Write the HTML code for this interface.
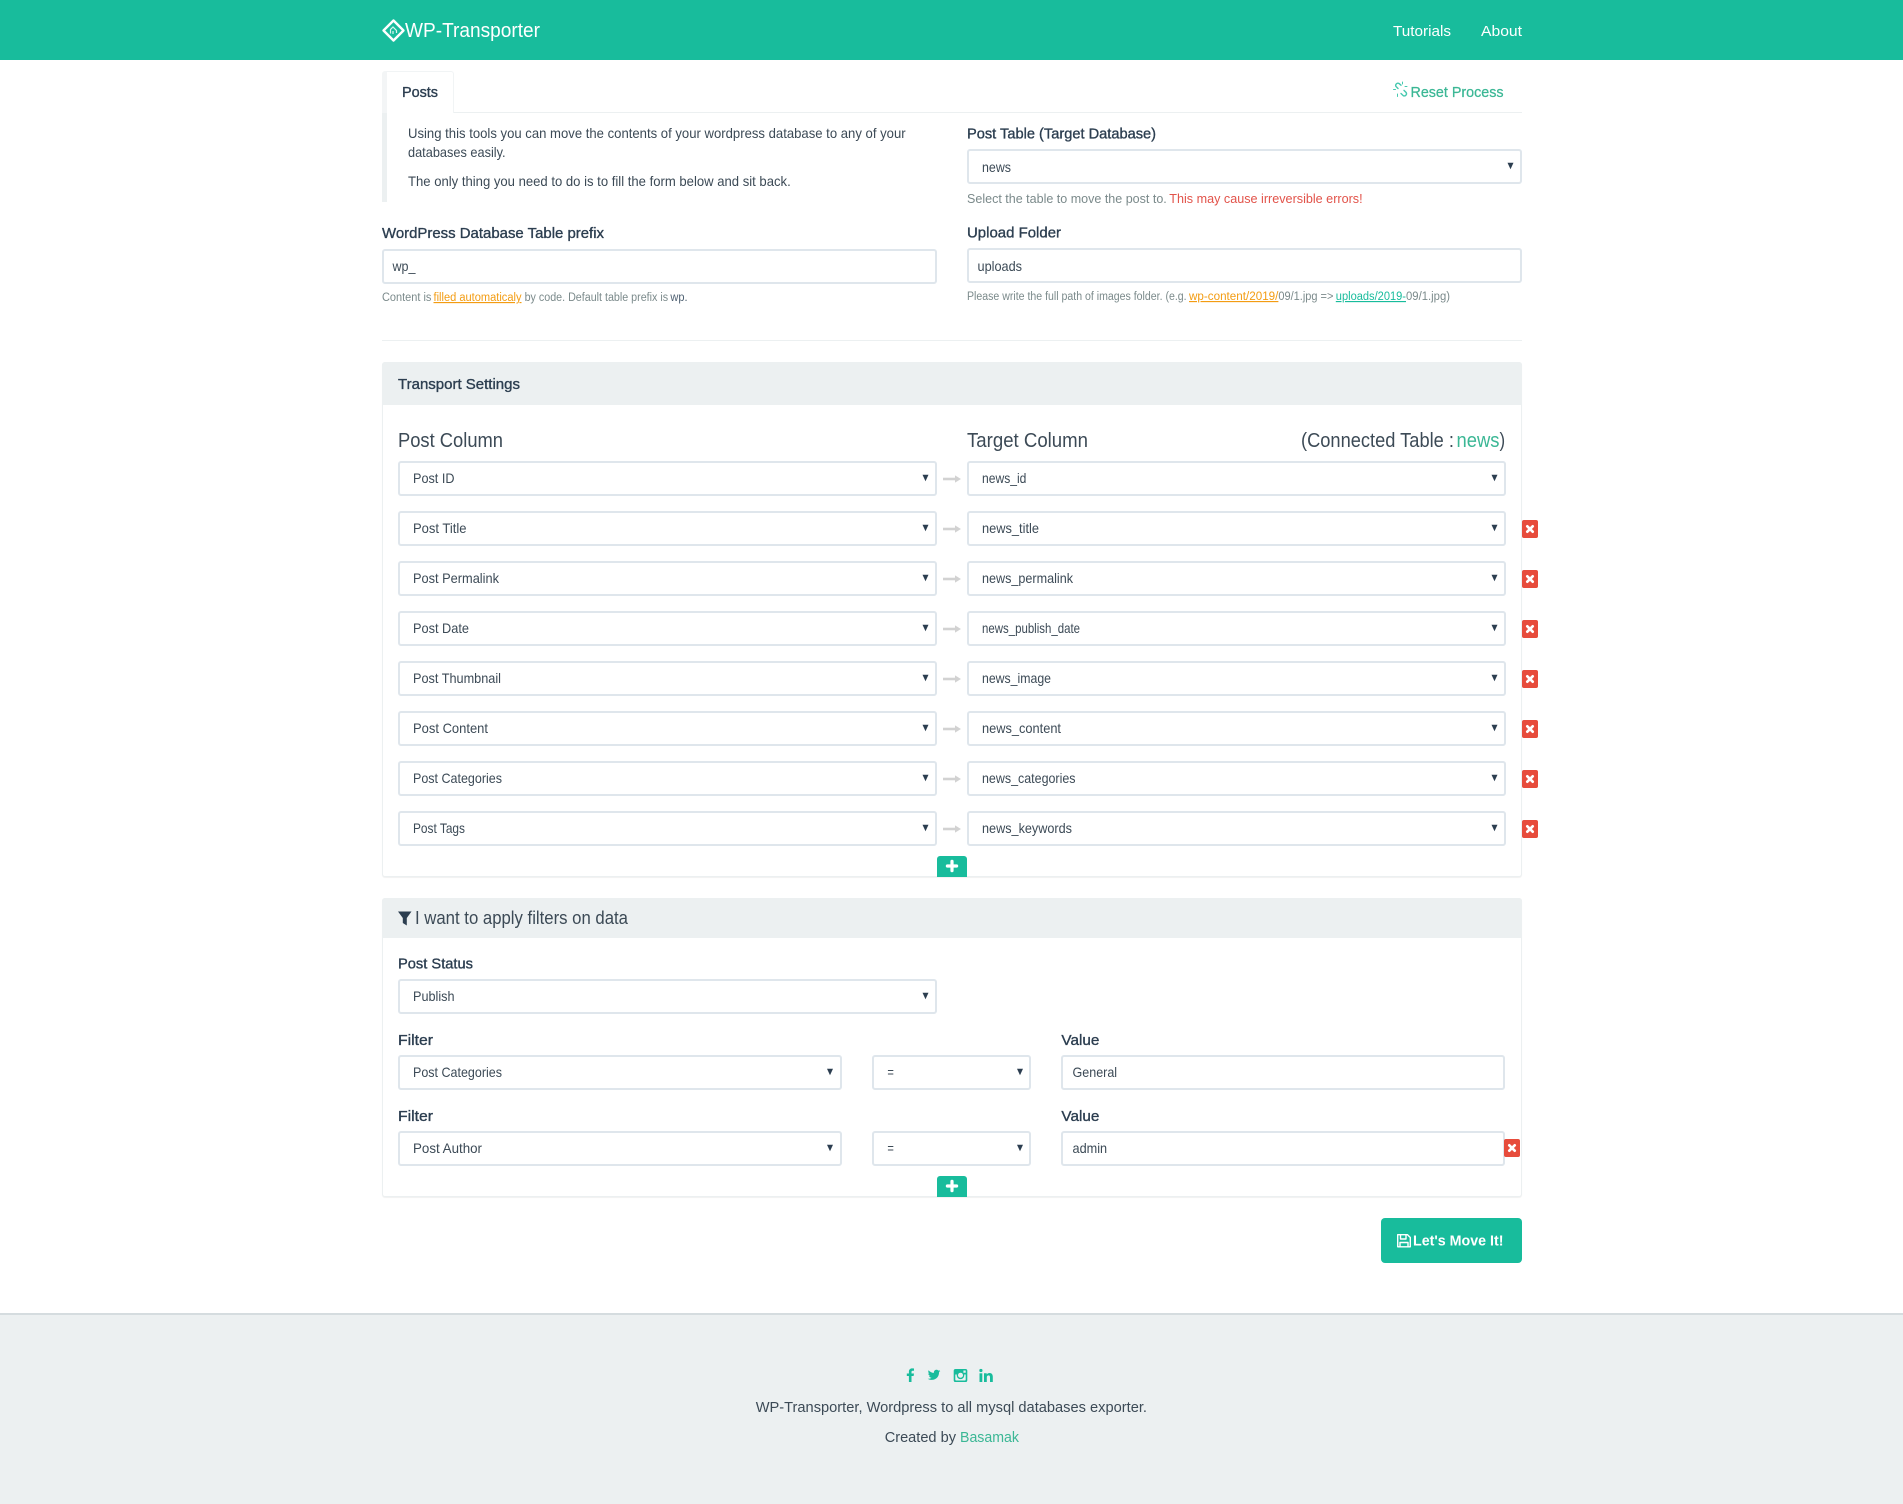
<!DOCTYPE html>
<html lang="en"><head><meta charset="utf-8"><title>WP-Transporter</title>
<style>
html,body{margin:0;padding:0;background:#fff}
body{position:relative;width:1903px;height:1504px;overflow:hidden}
.a{position:absolute;box-sizing:border-box}
.f{border:2px solid #dfe6ec;border-radius:3px;background:#fff;height:35px}
.panel{border:1px solid #ecf0f1;border-radius:3px;box-shadow:0 1px 1px rgba(0,0,0,.06);background:#fff}
.ph{background:#ecf0f1;border-radius:3px 3px 0 0}
svg text{font-family:"Liberation Sans",Arial,sans-serif;fill:#2c3e50;font-size:14px}
svg text.c{fill:#3c4a56}
svg text.l{font-size:15px;stroke:#2c3e50;stroke-width:.35}
svg text.h{font-size:12.5px;fill:#7b8a8b}
svg text.s{font-size:11.5px;fill:#7b8a8b}
svg text.b{font-size:14px;fill:#3c4a56}
svg text.t{font-size:20px;fill:#3c4a56}
svg text.w{fill:#fff;font-size:15px}
svg text.g{fill:#3bb795}
</style></head><body>
<div class="a" style="left:0;top:0;width:1903px;height:60px;background:#18bc9c"></div>

<div class="a" style="left:454px;top:112px;width:1068px;height:1px;background:#ecf0f1"></div>
<div class="a" style="left:382px;top:71px;width:72px;height:42px;border:1px solid #f1f4f5;border-left:5px solid #f3f5f6;border-bottom:0;border-radius:3px 3px 0 0"></div>
<div class="a" style="left:382px;top:113px;width:5px;height:89px;background:#ecf0f1"></div>

<div class="a f" style="left:382px;top:249px;width:555px"></div>
<div class="a f" style="left:967px;top:149px;width:555px"></div>
<div class="a f" style="left:967px;top:248px;width:555px"></div>
<div class="a" style="left:382px;top:340px;width:1140px;height:1px;background:#ecf0f1"></div>

<div class="a panel" style="left:382px;top:362px;width:1140px;height:515px"></div>
<div class="a ph" style="left:382px;top:362px;width:1140px;height:43px"></div>
<div class="a f" style="left:398px;top:461px;width:539px"></div><div class="a f" style="left:967px;top:461px;width:539px"></div>
<div class="a f" style="left:398px;top:511px;width:539px"></div><div class="a f" style="left:967px;top:511px;width:539px"></div>
<div class="a f" style="left:398px;top:561px;width:539px"></div><div class="a f" style="left:967px;top:561px;width:539px"></div>
<div class="a f" style="left:398px;top:611px;width:539px"></div><div class="a f" style="left:967px;top:611px;width:539px"></div>
<div class="a f" style="left:398px;top:661px;width:539px"></div><div class="a f" style="left:967px;top:661px;width:539px"></div>
<div class="a f" style="left:398px;top:711px;width:539px"></div><div class="a f" style="left:967px;top:711px;width:539px"></div>
<div class="a f" style="left:398px;top:761px;width:539px"></div><div class="a f" style="left:967px;top:761px;width:539px"></div>
<div class="a f" style="left:398px;top:811px;width:539px"></div><div class="a f" style="left:967px;top:811px;width:539px"></div>
<div class="a" style="left:937px;top:856px;width:30px;height:21px;background:#18bc9c;border-radius:3px 3px 0 0"></div>

<div class="a panel" style="left:382px;top:898px;width:1140px;height:299px"></div>
<div class="a ph" style="left:382px;top:898px;width:1140px;height:40px"></div>
<div class="a f" style="left:398px;top:979px;width:539px"></div>
<div class="a f" style="left:398px;top:1055px;width:444px"></div>
<div class="a f" style="left:872px;top:1055px;width:159px"></div>
<div class="a f" style="left:1061px;top:1055px;width:444px"></div>
<div class="a f" style="left:398px;top:1131px;width:444px"></div>
<div class="a f" style="left:872px;top:1131px;width:159px"></div>
<div class="a f" style="left:1061px;top:1131px;width:444px"></div>
<div class="a" style="left:937px;top:1176px;width:30px;height:21px;background:#18bc9c;border-radius:3px 3px 0 0"></div>

<div class="a" style="left:1381px;top:1218px;width:141px;height:45px;background:#18bc9c;border-radius:4px"></div>
<div class="a" style="left:0;top:1313px;width:1903px;height:191px;background:#ecf0f1;border-top:2px solid #d5dcdf"></div>

<svg class="a" style="left:0;top:0" width="1903" height="1504" viewBox="0 0 1903 1504" xmlns="http://www.w3.org/2000/svg">
<defs>
<path id="ch" d="M-3-3.2H3L0 3.2Z" fill="#2c3e50"/>
<g id="ar"><rect x="0" y="-1.3" width="13" height="2.6" fill="#d2d2d2"/><path d="M12-3.6L18 0L12 3.6Z" fill="#d2d2d2"/></g>
<g id="x"><rect width="16" height="18" rx="2" fill="#e74c3c"/><path d="M5.3 6.3L10.7 11.7M10.7 6.3L5.3 11.7" stroke="#fff" stroke-width="2.7" stroke-linecap="round"/></g>
<g id="pl"><path d="M0-4.6V4.6M-4.6 0H4.6" stroke="#fff" stroke-width="3.2" stroke-linecap="round"/></g>
</defs>

<!-- navbar -->
<g fill="none" stroke="#fff">
<path d="M393.5 20.5L403.5 30.5L393.5 40.5L383.5 30.5Z" stroke-width="2.4" stroke-linejoin="round"/>
<path d="M390.5 33.5V29.5L393 27L396.5 30.5V33" stroke-width="1.2" opacity=".85"/>
<path d="M393 31V34" stroke-width="1.2" opacity=".85"/>
</g>
<text class="w" x="405" y="37" style="font-size:20px" textLength="135" lengthAdjust="spacingAndGlyphs">WP-Transporter</text>
<text class="w" x="1393" y="36" textLength="58" lengthAdjust="spacingAndGlyphs">Tutorials</text>
<text class="w" x="1481" y="36" textLength="41" lengthAdjust="spacingAndGlyphs">About</text>

<!-- tab row -->
<text class="l" x="402" y="97" textLength="36" lengthAdjust="spacingAndGlyphs">Posts</text>
<g fill="none" stroke="#18bc9c" stroke-width="1.4" stroke-linecap="round" opacity=".8">
<path d="M1398 88.5L1396 86.5a2.2 2.2 0 0 1 3-3L1401 85.2"/>
<path d="M1401 93.5L1403.2 95.6a2.2 2.2 0 0 0 3-3L1404 90.4"/>
<path d="M1393.5 89.5H1395.5M1397.5 94V96.5M1402.5 82V84M1405 86.5H1407" stroke-width="1"/>
</g>
<text class="g" x="1410.5" y="97" style="font-size:15px;stroke:#3bb795;stroke-width:.25" textLength="93" lengthAdjust="spacingAndGlyphs">Reset Process</text>

<!-- intro -->
<text class="b" x="408" y="138" textLength="497.6" lengthAdjust="spacingAndGlyphs">Using this tools you can move the contents of your wordpress database to any of your</text>
<text class="b" x="408" y="157" textLength="97.6" lengthAdjust="spacingAndGlyphs">databases easily.</text>
<text class="b" x="408" y="186" textLength="382.7" lengthAdjust="spacingAndGlyphs">The only thing you need to do is to fill the form below and sit back.</text>

<text class="l" x="382" y="238" textLength="222" lengthAdjust="spacingAndGlyphs">WordPress Database Table prefix</text>
<text class="c" x="392.5" y="271" textLength="23" lengthAdjust="spacingAndGlyphs">wp_</text>
<text class="s" x="382" y="301" textLength="49.4" lengthAdjust="spacingAndGlyphs">Content is</text>
<text class="s" x="433.5" y="301" style="fill:#f39c12;text-decoration:underline" textLength="88" lengthAdjust="spacingAndGlyphs">filled automaticaly</text>
<text class="s" x="524.6" y="301" textLength="143.5" lengthAdjust="spacingAndGlyphs">by code. Default table prefix is</text>
<text class="s" x="670.4" y="301" style="fill:#4f6172" textLength="17.2" lengthAdjust="spacingAndGlyphs">wp.</text>

<text class="l" x="967" y="138.5" textLength="189" lengthAdjust="spacingAndGlyphs">Post Table (Target Database)</text>
<text class="c" x="982" y="172" textLength="29" lengthAdjust="spacingAndGlyphs">news</text>
<use href="#ch" x="1510.5" y="166"/>
<text class="h" x="967" y="203" textLength="199.8" lengthAdjust="spacingAndGlyphs">Select the table to move the post to.</text>
<text class="h" x="1169.3" y="203" style="fill:#e2534a" textLength="193.3" lengthAdjust="spacingAndGlyphs">This may cause irreversible errors!</text>

<text class="l" x="967" y="237.5" textLength="94" lengthAdjust="spacingAndGlyphs">Upload Folder</text>
<text class="c" x="977.5" y="271" textLength="44.5" lengthAdjust="spacingAndGlyphs">uploads</text>
<text class="s" x="967" y="300" textLength="219.6" lengthAdjust="spacingAndGlyphs">Please write the full path of images folder. (e.g.</text>
<text class="s" x="1189" y="300" style="fill:#f39c12;text-decoration:underline" textLength="89.4" lengthAdjust="spacingAndGlyphs">wp-content/2019/</text>
<text class="s" x="1278.4" y="300" textLength="55" lengthAdjust="spacingAndGlyphs">09/1.jpg =&gt;</text>
<text class="s" x="1335.8" y="300" style="fill:#18bc9c;text-decoration:underline" textLength="70.2" lengthAdjust="spacingAndGlyphs">uploads/2019-</text>
<text class="s" x="1406" y="300" textLength="44" lengthAdjust="spacingAndGlyphs">09/1.jpg)</text>

<!-- transport -->
<text class="l" x="398" y="389" style="font-size:14.5px" textLength="122" lengthAdjust="spacingAndGlyphs">Transport Settings</text>
<text class="t" x="398" y="447" textLength="105" lengthAdjust="spacingAndGlyphs">Post Column</text>
<text class="t" x="967" y="447" textLength="121" lengthAdjust="spacingAndGlyphs">Target Column</text>
<text class="t" x="1301" y="447" textLength="153" lengthAdjust="spacingAndGlyphs">(Connected Table :</text>
<text class="t" x="1456.5" y="447" style="fill:#3bb795" textLength="43" lengthAdjust="spacingAndGlyphs">news</text>
<text class="t" x="1499.5" y="447" textLength="5.6" lengthAdjust="spacingAndGlyphs">)</text>

<text class="c" x="413" y="483" textLength="41.5" lengthAdjust="spacingAndGlyphs">Post ID</text>
<text class="c" x="413" y="533" textLength="53.5" lengthAdjust="spacingAndGlyphs">Post Title</text>
<text class="c" x="413" y="583" textLength="86" lengthAdjust="spacingAndGlyphs">Post Permalink</text>
<text class="c" x="413" y="633" textLength="56" lengthAdjust="spacingAndGlyphs">Post Date</text>
<text class="c" x="413" y="683" textLength="88" lengthAdjust="spacingAndGlyphs">Post Thumbnail</text>
<text class="c" x="413" y="733" textLength="75" lengthAdjust="spacingAndGlyphs">Post Content</text>
<text class="c" x="413" y="783" textLength="89" lengthAdjust="spacingAndGlyphs">Post Categories</text>
<text class="c" x="413" y="833" textLength="52" lengthAdjust="spacingAndGlyphs">Post Tags</text>

<text class="c" x="982" y="483" textLength="44.4" lengthAdjust="spacingAndGlyphs">news_id</text>
<text class="c" x="982" y="533" textLength="57" lengthAdjust="spacingAndGlyphs">news_title</text>
<text class="c" x="982" y="583" textLength="91" lengthAdjust="spacingAndGlyphs">news_permalink</text>
<text class="c" x="982" y="633" textLength="98" lengthAdjust="spacingAndGlyphs">news_publish_date</text>
<text class="c" x="982" y="683" textLength="69" lengthAdjust="spacingAndGlyphs">news_image</text>
<text class="c" x="982" y="733" textLength="79" lengthAdjust="spacingAndGlyphs">news_content</text>
<text class="c" x="982" y="783" textLength="93.5" lengthAdjust="spacingAndGlyphs">news_categories</text>
<text class="c" x="982" y="833" textLength="90" lengthAdjust="spacingAndGlyphs">news_keywords</text>

<use href="#ch" x="925.5" y="478"/><use href="#ch" x="925.5" y="528"/><use href="#ch" x="925.5" y="578"/><use href="#ch" x="925.5" y="628"/><use href="#ch" x="925.5" y="678"/><use href="#ch" x="925.5" y="728"/><use href="#ch" x="925.5" y="778"/><use href="#ch" x="925.5" y="828"/>
<use href="#ch" x="1494.5" y="478"/><use href="#ch" x="1494.5" y="528"/><use href="#ch" x="1494.5" y="578"/><use href="#ch" x="1494.5" y="628"/><use href="#ch" x="1494.5" y="678"/><use href="#ch" x="1494.5" y="728"/><use href="#ch" x="1494.5" y="778"/><use href="#ch" x="1494.5" y="828"/>
<use href="#ar" x="943" y="479"/><use href="#ar" x="943" y="529"/><use href="#ar" x="943" y="579"/><use href="#ar" x="943" y="629"/><use href="#ar" x="943" y="679"/><use href="#ar" x="943" y="729"/><use href="#ar" x="943" y="779"/><use href="#ar" x="943" y="829"/>
<use href="#x" x="1522" y="520"/><use href="#x" x="1522" y="570"/><use href="#x" x="1522" y="620"/><use href="#x" x="1522" y="670"/><use href="#x" x="1522" y="720"/><use href="#x" x="1522" y="770"/><use href="#x" x="1522" y="820"/>
<use href="#pl" x="952" y="866"/>

<!-- filters -->
<path d="M398 911.5H411.5L406.8 918V925.5L402.8 923V918Z" fill="#2c3e50"/>
<text x="415" y="924" style="font-size:18px;fill:#3c4a56" textLength="213" lengthAdjust="spacingAndGlyphs">I want to apply filters on data</text>
<text class="l" x="398" y="968.5" textLength="75" lengthAdjust="spacingAndGlyphs">Post Status</text>
<text class="c" x="413" y="1001" textLength="41.5" lengthAdjust="spacingAndGlyphs">Publish</text>
<use href="#ch" x="925.5" y="996"/>

<text class="l" x="398" y="1045" textLength="35" lengthAdjust="spacingAndGlyphs">Filter</text>
<text class="l" x="1061.4" y="1045" textLength="38" lengthAdjust="spacingAndGlyphs">Value</text>
<text class="c" x="413" y="1077" textLength="89" lengthAdjust="spacingAndGlyphs">Post Categories</text>
<use href="#ch" x="830" y="1072"/>
<text class="c" x="887.4" y="1077" textLength="6.5" lengthAdjust="spacingAndGlyphs">=</text>
<use href="#ch" x="1020" y="1072"/>
<text class="c" x="1072.5" y="1077" textLength="44.6" lengthAdjust="spacingAndGlyphs">General</text>

<text class="l" x="398" y="1121" textLength="35" lengthAdjust="spacingAndGlyphs">Filter</text>
<text class="l" x="1061.4" y="1121" textLength="38" lengthAdjust="spacingAndGlyphs">Value</text>
<text class="c" x="413" y="1153" textLength="69" lengthAdjust="spacingAndGlyphs">Post Author</text>
<use href="#ch" x="830" y="1148"/>
<text class="c" x="887.4" y="1153" textLength="6.5" lengthAdjust="spacingAndGlyphs">=</text>
<use href="#ch" x="1020" y="1148"/>
<text class="c" x="1072.5" y="1153" textLength="34.6" lengthAdjust="spacingAndGlyphs">admin</text>
<use href="#x" x="1504" y="1139"/>
<use href="#pl" x="952" y="1186"/>

<!-- button -->
<g fill="none" stroke="#fff" stroke-width="1.4" stroke-linejoin="round">
<path d="M1397.7 1234.7H1407.5L1410.3 1237.5V1246.8H1397.7Z"/>
<path d="M1400.5 1234.7V1239H1406V1234.7M1400 1246.8V1242.5H1408V1246.8"/>
</g>
<text class="w" x="1413" y="1245.5" style="font-size:15px;font-weight:bold" textLength="90.5" lengthAdjust="spacingAndGlyphs">Let's Move It!</text>

<!-- footer social -->
<g fill="#18bc9c">
<path d="M911.5 1382V1376H913.6L914 1373.5H911.5V1371.9C911.5 1371.2 911.7 1370.7 912.7 1370.7H914V1368.5C913.7 1368.5 913 1368.4 912.1 1368.4C910.2 1368.4 908.9 1369.6 908.9 1371.7V1373.5H906.8V1376H908.9V1382Z"/>
<path transform="translate(927.5,1368.5) scale(.56)" d="M23 4.5c-.8.4-1.7.6-2.6.7.9-.6 1.6-1.4 2-2.5-.9.5-1.9.9-2.9 1.1C18.6 2.9 17.4 2.3 16 2.3c-2.6 0-4.6 2.1-4.6 4.6 0 .4 0 .7.1 1C7.7 7.7 4.3 5.9 2 3.1c-.4.7-.6 1.5-.6 2.3 0 1.6.8 3 2 3.8-.8 0-1.5-.2-2.1-.6v.1c0 2.2 1.6 4.1 3.7 4.5-.4.1-.8.2-1.2.2-.3 0-.6 0-.9-.1.6 1.8 2.3 3.2 4.3 3.2C5.6 17.7 3.6 18.4 1.5 18.4c-.4 0-.7 0-1.1-.1 2 1.3 4.5 2.1 7.1 2.1 8.5 0 13.1-7 13.1-13.1v-.6c.9-.6 1.7-1.5 2.4-2.2z"/>
<path fill-rule="evenodd" d="M955.5 1369H965.5A1.8 1.8 0 0 1 967.3 1370.8V1380.2A1.8 1.8 0 0 1 965.5 1382H955.5A1.8 1.8 0 0 1 953.7 1380.2V1370.8A1.8 1.8 0 0 1 955.5 1369ZM955.3 1374.5V1379.8A.7.7 0 0 0 956 1380.5H965A.7.7 0 0 0 965.7 1379.8V1374.5H964.2A3.8 3.8 0 1 1 956.8 1374.5ZM960.5 1372.7A2.5 2.5 0 1 0 960.51 1372.7ZM963.4 1370.5V1372.8H965.7V1370.5Z"/>
<rect x="979.5" y="1373.3" width="2.8" height="8.7"/><circle cx="980.9" cy="1370.5" r="1.6"/>
<path d="M984 1373.3H986.7V1374.5C987.3 1373.6 988.3 1373 989.6 1373C991.7 1373 992.8 1374.4 992.8 1376.9V1382H990V1377.3C990 1376.1 989.6 1375.4 988.6 1375.4C987.5 1375.4 986.8 1376.2 986.8 1377.4V1382H984Z"/>
</g>
<text x="755.7" y="1412" style="font-size:15px;fill:#3c4a56" textLength="391.3" lengthAdjust="spacingAndGlyphs">WP-Transporter, Wordpress to all mysql databases exporter.</text>
<text x="884.7" y="1442" style="font-size:15px;fill:#3c4a56" textLength="71.3" lengthAdjust="spacingAndGlyphs">Created by</text>
<text class="g" x="960" y="1442" style="font-size:15px" textLength="59" lengthAdjust="spacingAndGlyphs">Basamak</text>
</svg>
</body></html>
